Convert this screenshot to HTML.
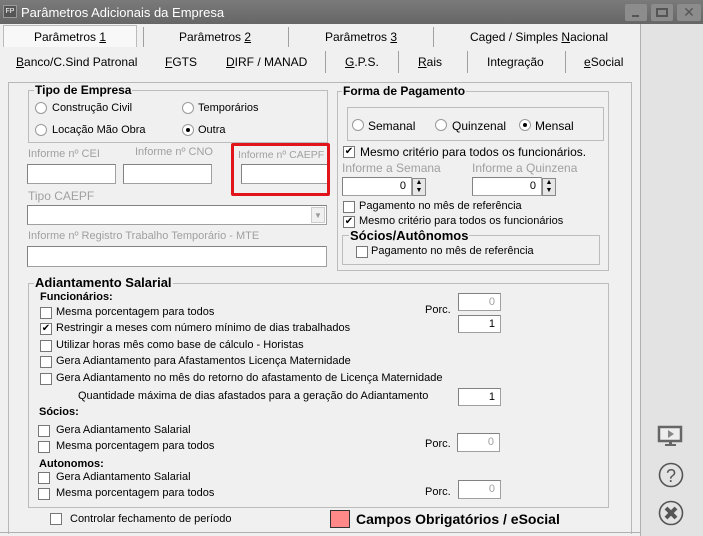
<!DOCTYPE html>
<html><head><meta charset="utf-8"><style>
*{box-sizing:border-box;margin:0;padding:0}
body{width:703px;height:536px;overflow:hidden;background:#f0f0f0;font-family:"Liberation Sans","DejaVu Sans",sans-serif;font-size:12px;color:#000;position:relative}
.a{position:absolute;white-space:nowrap}
.s{font-size:11px}
.g{color:#a0a0a0}
.gb{position:absolute;border:1px solid #bcbcbc}
.gt{position:absolute;background:#f0f0f0;font-weight:bold;font-size:12px;padding:0 1px}
.in{position:absolute;background:#fff;border:1px solid #a0a0a0;border-top-color:#828282;border-left-color:#828282}
.cb{position:absolute;width:12px;height:12px;background:#fff;border:1px solid #777;font-size:10px;line-height:10px;text-align:center;font-weight:bold}
.rd{position:absolute;width:12px;height:12px;border-radius:50%;background:#fff;border:1px solid #999}
.rd.on::after{content:"";position:absolute;left:3px;top:3px;width:4px;height:4px;border-radius:50%;background:#000}
.sep{position:absolute;width:1px;background:#a0a0a0}
u{text-decoration:underline}
.num{position:absolute;text-align:right;padding-right:5px;font-size:11px;line-height:16px}
</style></head><body>
<!-- title -->
<div class="a" style="left:0;top:0;width:703px;height:24px;background:linear-gradient(#7a7a7a,#666)"></div>
<div class="a" style="left:3px;top:5px;width:14px;height:13px;background:#555;border:1px solid #999;color:#fff;font-size:7px;line-height:11px;text-align:center">FP</div>
<div class="a" style="left:21px;top:5px;color:#fff;font-size:13px">Parâmetros Adicionais da Empresa</div>
<div class="a" style="left:625px;top:4px;width:22px;height:17px;background:#8c8c8c;border-radius:2px"><div class="a" style="left:7px;top:11px;width:7px;height:2px;background:#555"></div></div>
<div class="a" style="left:651px;top:4px;width:22px;height:17px;background:#8c8c8c;border-radius:2px"><div class="a" style="left:5px;top:4px;width:12px;height:9px;border:2px solid #555"></div></div>
<div class="a" style="left:677px;top:4px;width:24px;height:17px;background:#8c8c8c;border-radius:2px;color:#555;font-weight:bold;font-size:14px;line-height:17px;text-align:center">✕</div>
<!-- right panel -->
<div class="a" style="left:640px;top:24px;width:63px;height:512px;background:#e3e3e3;border-left:1px solid #b0b0b0"></div>
<svg class="a" style="left:656px;top:424px" width="30" height="24" viewBox="0 0 30 24"><rect x="3" y="3" width="22" height="14" fill="#eee" stroke="#666" stroke-width="2.5"/><path d="M12 6 L18 10 L12 14Z" fill="#888"/><rect x="13" y="17" width="3" height="3" fill="#666"/><rect x="9" y="20" width="11" height="2" fill="#666"/></svg>
<svg class="a" style="left:657px;top:461px" width="28" height="28"><circle cx="14" cy="14" r="11.5" fill="none" stroke="#555" stroke-width="1.6"/><text x="14" y="21" text-anchor="middle" font-family="Liberation Sans" font-size="18" fill="#555">?</text></svg>
<svg class="a" style="left:657px;top:499px" width="28" height="28"><circle cx="14" cy="14" r="11.5" fill="none" stroke="#555" stroke-width="1.6"/><path d="M9 9 L19 19 M19 9 L9 19" stroke="#555" stroke-width="4"/></svg>
<!-- tabs row1 -->
<div class="a" style="left:3px;top:25px;width:134px;height:22px;background:#f8f8f8;border:1px solid #bbb;border-bottom:none"></div>
<div class="a" style="left:34px;top:30px">Parâmetros <u>1</u></div>
<div class="sep" style="left:143px;top:27px;height:20px"></div>
<div class="a" style="left:179px;top:30px">Parâmetros <u>2</u></div>
<div class="sep" style="left:288px;top:27px;height:20px"></div>
<div class="a" style="left:325px;top:30px">Parâmetros <u>3</u></div>
<div class="sep" style="left:433px;top:27px;height:20px"></div>
<div class="a" style="left:470px;top:30px">Caged / Simples <u>N</u>acional</div>
<!-- tabs row2 -->
<div class="a" style="left:16px;top:55px"><u>B</u>anco/C.Sind Patronal</div>
<div class="a" style="left:165px;top:55px"><u>F</u>GTS</div>
<div class="a" style="left:226px;top:55px"><u>D</u>IRF / MANAD</div>
<div class="sep" style="left:325px;top:51px;height:22px"></div>
<div class="a" style="left:345px;top:55px"><u>G</u>.P.S.</div>
<div class="sep" style="left:398px;top:51px;height:22px"></div>
<div class="a" style="left:418px;top:55px"><u>R</u>ais</div>
<div class="sep" style="left:467px;top:51px;height:22px"></div>
<div class="a" style="left:487px;top:55px">Integração</div>
<div class="sep" style="left:565px;top:51px;height:22px"></div>
<div class="a" style="left:584px;top:55px"><u>e</u>Social</div>
<!-- outer frame -->
<div class="a" style="left:8px;top:82px;width:624px;height:452px;border:1px solid #b8b8b8;border-bottom:none"></div>
<!-- Tipo de empresa -->
<div class="gb" style="left:28px;top:90px;width:300px;height:53px"></div>
<div class="gt" style="left:34px;top:83px">Tipo de Empresa</div>
<div class="rd" style="left:35px;top:102px"></div><div class="a s" style="left:52px;top:102px">Construção Civil</div>
<div class="rd" style="left:182px;top:102px"></div><div class="a s" style="left:198px;top:102px">Temporários</div>
<div class="rd" style="left:35px;top:124px"></div><div class="a s" style="left:52px;top:124px">Locação Mão Obra</div>
<div class="rd on" style="left:182px;top:124px"></div><div class="a s" style="left:198px;top:124px">Outra</div>
<div class="a s g" style="left:28px;top:148px">Informe nº CEI</div>
<div class="a s g" style="left:135px;top:146px">Informe nº CNO</div>
<div class="a g" style="left:238px;top:149px;font-size:10.5px">Informe nº CAEPF</div>
<div class="in" style="left:27px;top:164px;width:89px;height:20px"></div>
<div class="in" style="left:123px;top:164px;width:89px;height:20px"></div>
<div class="in" style="left:241px;top:164px;width:88px;height:20px;border-right:none"></div>
<div class="a" style="left:231px;top:143px;width:99px;height:53px;border:3px solid #e0141a;border-radius:2px"></div>
<div class="a g" style="left:28px;top:189px">Tipo CAEPF</div>
<div class="in" style="left:27px;top:205px;width:300px;height:20px"></div>
<div class="a" style="left:311px;top:207px;width:14px;height:16px;background:#f0f0f0;border:1px solid #ccc;color:#999;font-size:8px;line-height:15px;text-align:center">▼</div>
<div class="a s g" style="left:28px;top:230px">Informe nº Registro Trabalho Temporário - MTE</div>
<div class="in" style="left:27px;top:246px;width:300px;height:21px"></div>
<!-- Forma de pagamento -->
<div class="gb" style="left:337px;top:91px;width:272px;height:180px"></div>
<div class="gt" style="left:342px;top:84px">Forma de Pagamento</div>
<div class="gb" style="left:347px;top:107px;width:257px;height:34px"></div>
<div class="rd" style="left:352px;top:119px"></div><div class="a" style="left:368px;top:119px">Semanal</div>
<div class="rd" style="left:435px;top:119px"></div><div class="a" style="left:452px;top:119px">Quinzenal</div>
<div class="rd on" style="left:519px;top:119px"></div><div class="a" style="left:535px;top:119px">Mensal</div>
<div class="cb" style="left:343px;top:146px">✔</div><div class="a" style="left:360px;top:145px">Mesmo critério para todos os funcionários.</div>
<div class="a g" style="left:342px;top:161px">Informe a Semana</div>
<div class="a g" style="left:472px;top:161px">Informe a Quinzena</div>
<div class="in num" style="left:342px;top:177px;width:70px;height:19px">0</div>
<div class="a" style="left:412px;top:178px;width:14px;height:18px;background:#e6e6e6;border:1px solid #888;font-size:7px;line-height:8px;text-align:center">▲<br>▼</div>
<div class="in num" style="left:472px;top:177px;width:70px;height:19px">0</div>
<div class="a" style="left:542px;top:178px;width:14px;height:18px;background:#e6e6e6;border:1px solid #888;font-size:7px;line-height:8px;text-align:center">▲<br>▼</div>
<div class="cb" style="left:343px;top:201px"></div><div class="a s" style="left:359px;top:200px">Pagamento no mês de referência</div>
<div class="cb" style="left:343px;top:216px">✔</div><div class="a s" style="left:359px;top:215px">Mesmo critério para todos os funcionários</div>
<div class="gb" style="left:342px;top:235px;width:258px;height:30px"></div>
<div class="gt" style="left:349px;top:228px;font-size:13px">Sócios/Autônomos</div>
<div class="cb" style="left:356px;top:246px"></div><div class="a s" style="left:371px;top:245px">Pagamento no mês de referência</div>
<!-- Adiantamento -->
<div class="gb" style="left:28px;top:283px;width:581px;height:225px"></div>
<div class="gt" style="left:34px;top:275px;font-size:13px">Adiantamento Salarial</div>
<div class="a s" style="left:40px;top:291px;font-weight:bold">Funcionários:</div>
<div class="cb" style="left:40px;top:307px"></div><div class="a s" style="left:56px;top:306px">Mesma porcentagem para todos</div>
<div class="cb" style="left:40px;top:323px">✔</div><div class="a s" style="left:56px;top:322px">Restringir a meses com número mínimo de dias trabalhados</div>
<div class="cb" style="left:40px;top:340px"></div><div class="a s" style="left:56px;top:339px">Utilizar horas mês como base de cálculo - Horistas</div>
<div class="cb" style="left:40px;top:356px"></div><div class="a s" style="left:56px;top:355px">Gera Adiantamento para Afastamentos Licença Maternidade</div>
<div class="cb" style="left:40px;top:373px"></div><div class="a s" style="left:56px;top:372px">Gera Adiantamento no mês do retorno do afastamento de Licença Maternidade</div>
<div class="a s" style="left:78px;top:390px">Quantidade máxima de dias afastados para a geração do Adiantamento</div>
<div class="a s" style="left:425px;top:304px">Porc.</div>
<div class="in num g" style="left:458px;top:293px;width:43px;height:18px">0</div>
<div class="in num" style="left:458px;top:315px;width:43px;height:18px">1</div>
<div class="in num" style="left:458px;top:388px;width:43px;height:18px">1</div>
<div class="a s" style="left:39px;top:406px;font-weight:bold">Sócios:</div>
<div class="cb" style="left:38px;top:425px"></div><div class="a s" style="left:56px;top:424px">Gera Adiantamento Salarial</div>
<div class="cb" style="left:38px;top:441px"></div><div class="a s" style="left:56px;top:440px">Mesma porcentagem para todos</div>
<div class="a s" style="left:425px;top:438px">Porc.</div>
<div class="in num g" style="left:457px;top:433px;width:43px;height:19px">0</div>
<div class="a s" style="left:39px;top:458px;font-weight:bold">Autonomos:</div>
<div class="cb" style="left:38px;top:472px"></div><div class="a s" style="left:56px;top:471px">Gera Adiantamento Salarial</div>
<div class="cb" style="left:38px;top:488px"></div><div class="a s" style="left:56px;top:487px">Mesma porcentagem para todos</div>
<div class="a s" style="left:425px;top:486px">Porc.</div>
<div class="in num g" style="left:458px;top:480px;width:43px;height:19px">0</div>
<div class="cb" style="left:50px;top:513px"></div><div class="a s" style="left:70px;top:513px">Controlar fechamento de período</div>
<div class="a" style="left:330px;top:510px;width:20px;height:18px;background:#f88;border:1px solid #333"></div>
<div class="a" style="left:356px;top:511px;font-weight:bold;font-size:14px">Campos Obrigatórios / eSocial</div>
<div class="a" style="left:0;top:532px;width:640px;height:1px;background:#b0b0b0"></div>
</body></html>
